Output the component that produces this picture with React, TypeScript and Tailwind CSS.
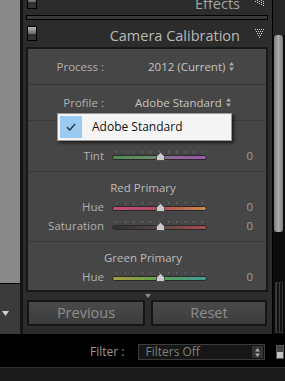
import React from "react";

type SliderSpec = { label: string; track: string };
type Section = { title: string; sliders: SliderSpec[] };

const SECTIONS: Section[] = [
  {
    title: "Shadows",
    sliders: [
      {
        label: "Tint",
        track:
          "bg-[linear-gradient(90deg,#4f8f4f,#6e8a6e_45%,#876c8e_55%,#a255b2)]",
      },
    ],
  },
  {
    title: "Red Primary",
    sliders: [
      {
        label: "Hue",
        track:
          "bg-[linear-gradient(90deg,#c24c80,#b84a58_50%,#c28c48)]",
      },
      {
        label: "Saturation",
        track:
          "bg-[linear-gradient(90deg,#2e2e2e,#5a4a4a_50%,#b04a4a)]",
      },
    ],
  },
  {
    title: "Green Primary",
    sliders: [
      {
        label: "Hue",
        track:
          "bg-[linear-gradient(90deg,#a4a23e,#62a04e_50%,#3c9e98)]",
      },
      {
        label: "Saturation",
        track:
          "bg-[linear-gradient(90deg,#2e2e2e,#4a5a4a_50%,#4aa04a)]",
      },
    ],
  },
];

export default function App() {
  return (
    <div className="flex h-[381px] w-[285px] flex-col overflow-hidden bg-black font-['Open_Sans','Noto_Sans',sans-serif]">
      <div className="flex h-[334px]">
        {/* filmstrip side */}
        <div className="flex w-[20px] flex-col">
          <div className="h-[283px] bg-[#8a8a8a]" />
          <div className="h-px bg-black" />
          <div className="flex flex-1 items-start bg-[#3b3b3b] pl-[2px] pt-[27px]">
            <svg width="7" height="5" viewBox="0 0 7 5">
              <polygon points="0,0 7,0 3.5,5" fill="#cfcfcf" />
            </svg>
          </div>
        </div>
        <div className="w-[3px] bg-[#141414]" />

        {/* develop panel */}
        <div className="flex w-[249px] flex-col bg-[#2c2c2c]">
          <PanelHeader title="Effects" dir="left" className="-mt-[12px] text-[#a4a4a4]" />
          <div className="ml-[3px] h-[5px] w-[242px] border border-black bg-[#3a3a3a]" />
          <PanelHeader title="Camera Calibration" dir="down" className="text-[#b8b8b8]" />

          <div className="relative ml-[3px] h-[245px] w-[242px] overflow-hidden border-2 border-[#181818] bg-[#464646] text-[11.5px] text-[#b0b0b0]">
            <div className="flex h-[35px] items-center">
              <span className="w-[76px] text-right">Process :</span>
              <span className="ml-[44px] flex items-center text-[#c4c4c4]">
                2012 (Current)
                <UpDown className="ml-[4px]" />
              </span>
            </div>
            <div className="h-px bg-[#373737]" />
            <div className="flex h-[35px] items-center">
              <span className="w-[76px] text-right">Profile :</span>
              <span className="ml-[31px] flex items-center text-[#c4c4c4]">
                Adobe Standard
                <UpDown className="ml-[4px]" />
              </span>
            </div>

            {SECTIONS.map((s) => (
              <div key={s.title}>
                <div className="h-px bg-[#3a3a3a]" />
                <div className="pb-[6px] pt-[6px]">
                  <div className="flex h-[19px] items-center justify-center pr-[8px] text-[#bcbcbc]">
                    {s.title}
                  </div>
                  {s.sliders.map((sl) => (
                    <SliderRow key={sl.label} {...sl} />
                  ))}
                </div>
              </div>
            ))}

            {/* profile menu */}
            <div className="absolute left-[29px] top-[64px] flex h-[28px] w-[175px] items-center border border-[#9a9a9a] bg-[#f5f5f5] px-[2px] shadow-[2px_2px_3px_rgba(0,0,0,0.6)]">
              <div className="flex h-[22px] w-[22px] items-center justify-center bg-[#9ccbf1]">
                <svg width="10" height="8" viewBox="0 0 10 8">
                  <path d="M1 4.2 L3.8 7 L9 1" fill="none" stroke="#2c3846" strokeWidth="1.5" />
                </svg>
              </div>
              <span className="ml-[10px] text-[12px] text-[#111]">Adobe Standard</span>
            </div>
          </div>

          <div className="flex h-[8px] items-center justify-center">
            <svg width="6" height="4" viewBox="0 0 6 4">
              <polygon points="0,0 6,0 3,4" fill="#8a8a8a" />
            </svg>
          </div>

          <div className="flex gap-[6px] pl-[4px]">
            <PanelButton label="Previous" className="w-[118px]" />
            <PanelButton label="Reset" className="w-[116px]" />
          </div>
        </div>
        <div className="w-px bg-black" />

        {/* scrollbar */}
        <div className="flex w-[12px] flex-col bg-[#0c0c0c]">
          <div className="h-[35px] bg-[#262626]" />
          <div className="ml-[1px] h-[197px] w-[9px] rounded-[3px] bg-[linear-gradient(90deg,#7c7c7c,#a9a9a9_50%,#7c7c7c)]" />
          <div className="h-[50px]" />
          <div className="mx-[2px] h-[51px] border border-[#333] bg-[repeating-linear-gradient(90deg,#3c3c3c_0_1px,#121212_1px_3px)]" />
        </div>
      </div>

      {/* filter bar */}
      <div className="flex h-[33px] items-center pt-[3px] text-[12px]">
        <span className="ml-[90px] text-[#9a9a9a]">Filter :</span>
        <div className="ml-[14px] flex h-[16px] w-[127px] items-center border border-[#3c3c3c] bg-[#161616]">
          <span className="flex-1 pl-[6px] text-[#7f7f7f]">Filters Off</span>
          <div className="mr-[1px] flex h-[12px] w-[11px] items-center justify-center bg-[#333]">
            <UpDown />
          </div>
        </div>
        <div className="ml-[11px] flex h-[14px] w-[8px] flex-col border border-[#555]">
          <div className="h-[6px] bg-[#444]" />
          <div className="flex-1 bg-[#c4c4c4]" />
        </div>
      </div>
      <div className="flex-1 border-t border-[#2c2c2c] bg-[#1b1b1b]" />
    </div>
  );
}

function PanelHeader({
  title,
  dir,
  className = "",
}: {
  title: string;
  dir: "left" | "down";
  className?: string;
}) {
  return (
    <div className={`flex h-[27px] shrink-0 items-center pl-[4px] pr-[8px] ${className}`}>
      <div className="flex h-[15px] w-[10px] flex-col border border-black">
        <div className="h-[7px] bg-gradient-to-b from-[#b4b4b4] to-[#6a6a6a]" />
        <div className="flex-1 bg-[#333]" />
      </div>
      <span className="ml-auto pt-[4px] text-[14.5px]">{title}</span>
      <DotTriangle dir={dir} />
    </div>
  );
}

function DotTriangle({ dir }: { dir: "left" | "down" }) {
  const dots: [number, number][] = [];
  for (let r = 0; r < 5; r++) {
    for (let i = 0; i < 5 - r; i++) {
      const a = r + i * 2;
      const b = r * 2;
      dots.push(dir === "down" ? [a, b] : [8 - b, a]);
    }
  }
  return (
    <svg className="ml-[15px]" width="9" height="9" viewBox="0 0 9 9">
      {dots.map(([x, y]) => (
        <rect key={`${x}-${y}`} x={x} y={y} width="1" height="1" fill="#d2d2d2" />
      ))}
    </svg>
  );
}

function UpDown({ className = "" }: { className?: string }) {
  return (
    <svg className={className} width="5" height="9" viewBox="0 0 5 9">
      <polygon points="2.5,0 5,3.5 0,3.5" fill="#a8a8a8" />
      <polygon points="0,5.5 5,5.5 2.5,9" fill="#a8a8a8" />
    </svg>
  );
}

function SliderRow({ label, track }: SliderSpec) {
  return (
    <div className="flex h-[19px] items-center">
      <span className="w-[76px] text-right">{label}</span>
      <div className="relative ml-[8px] h-[10px] w-[95px]">
        <div className="absolute left-[4px] right-[4px] top-0 flex justify-between">
          {Array.from({ length: 11 }).map((_, i) => (
            <span key={i} className="h-[2px] w-px bg-[#6a6a6a]" />
          ))}
        </div>
        <div className={`absolute inset-x-0 top-[4px] h-[5px] rounded-full border border-[#2a2a2a] ${track}`} />
        <svg className="absolute left-[44px] top-[1px]" width="9" height="9" viewBox="0 0 9 9">
          <polygon
            points="4.5,0.5 8.5,4.2 8.5,8.5 0.5,8.5 0.5,4.2"
            fill="#cacaca"
            stroke="#505050"
          />
        </svg>
      </div>
      <span className="ml-auto pr-[13px] text-[#9c9c9c]">0</span>
    </div>
  );
}

function PanelButton({ label, className = "" }: { label: string; className?: string }) {
  return (
    <div
      className={`flex h-[26px] items-center justify-center rounded-[2px] border-2 border-[#151515] bg-gradient-to-b from-[#4a4a4a] to-[#3c3c3c] text-[14.5px] text-[#8e8e8e] ${className}`}
    >
      {label}
    </div>
  );
}
